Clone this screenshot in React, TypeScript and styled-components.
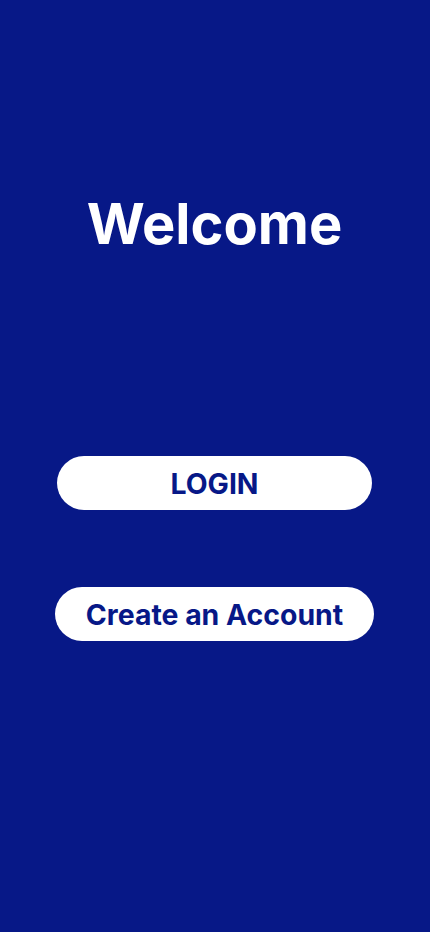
import styled, { createGlobalStyle } from "styled-components"

const GlobalStyle = createGlobalStyle`
	html,
	body {
		margin: 0;
		padding: 0;
		background: #071887;
	}
	* {
		box-sizing: border-box;
	}
`

const App = () => {
	return (
		<Screen>
			<GlobalStyle />
			<Title>Welcome</Title>
			<Actions>
				<PillButton width={315}>LOGIN</PillButton>
				<PillButton width={319}>Create an Account</PillButton>
			</Actions>
		</Screen>
	)
}

export default App

const Screen = styled.main`
	background: #071887;
	min-height: 932px;
	width: 430px;
	display: flex;
	flex-direction: column;
	align-items: center;
	padding-top: 186px;
	padding-right: 1px;
	font-family: Inter, "Noto Sans", sans-serif;
`

const Title = styled.h1`
	color: #ffffff;
	font-size: 56px;
	font-weight: 700;
	line-height: 76px;
	margin: 0;
`

const Actions = styled.div`
	display: flex;
	flex-direction: column;
	align-items: center;
	gap: 77px;
	margin-top: 194px;
`

const PillButton = styled.button<{ width: number }>`
	width: ${({ width }) => width}px;
	height: 54px;
	border: none;
	border-radius: 27px;
	background: #ffffff;
	color: #071887;
	font-family: Inter, "Noto Sans", sans-serif;
	font-size: 28.4px;
	font-weight: 700;
	cursor: pointer;
	padding: 0;
`
